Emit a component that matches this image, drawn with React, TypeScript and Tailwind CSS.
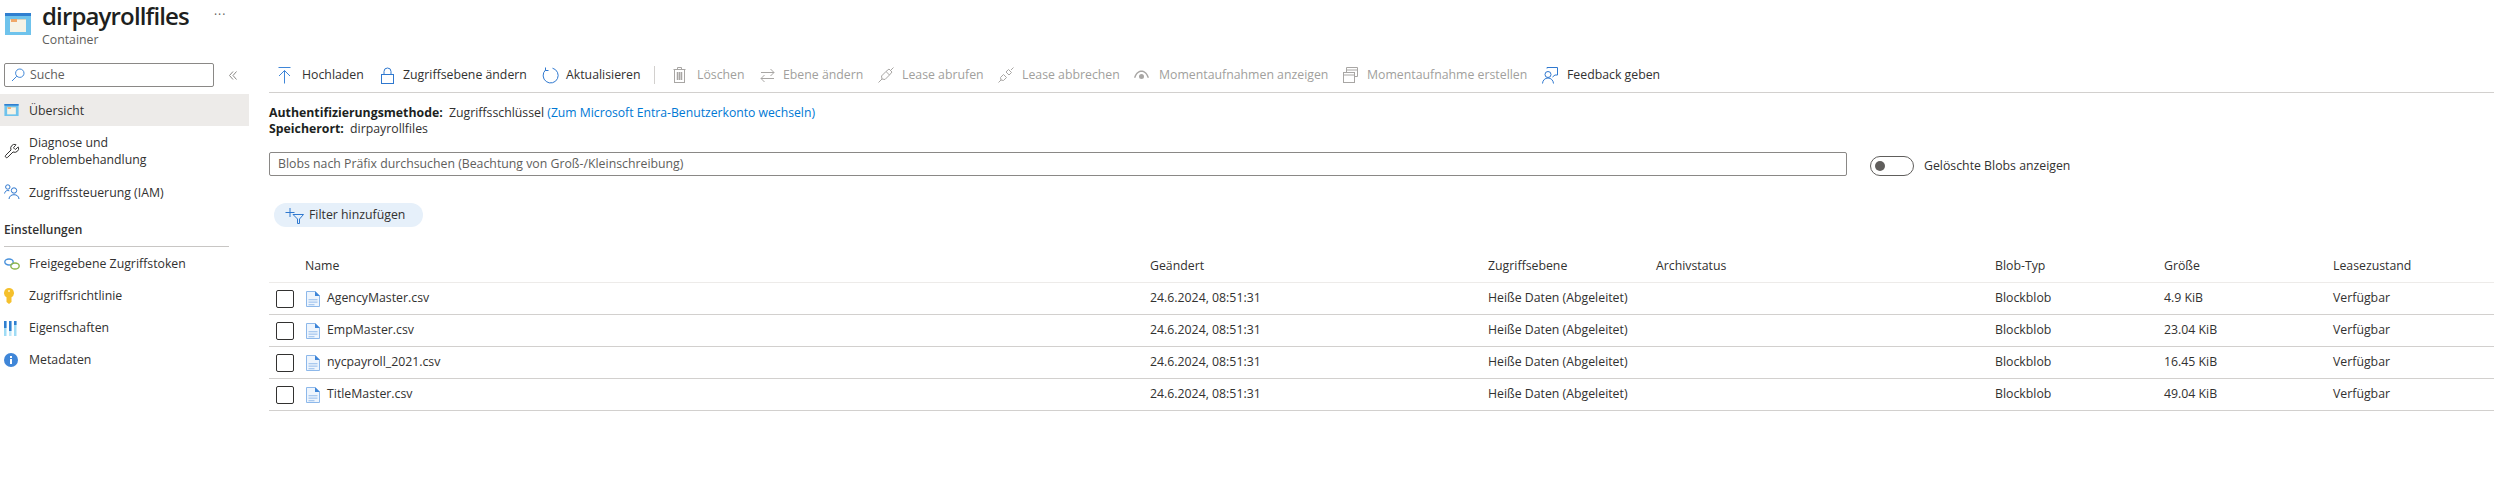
import React from "react";
import { Wrench } from "lucide-react";

const F = "font-['Open_Sans',sans-serif]";

function ContainerIcon({ w, h }: { w: number; h: number }) {
  return (
    <svg width={w} height={h} viewBox="0 0 26 22">
      <rect x="0" y="0" width="26" height="22" fill="#6fc3ec" />
      <rect x="0" y="0" width="26" height="3" fill="#2f7fd0" />
      <rect x="5" y="6" width="16" height="13" fill="#f5f3e6" />
      <rect x="5" y="6" width="16" height="1" fill="#d9d3bd" />
      <rect x="6" y="6" width="6" height="3" fill="#f0a868" />
    </svg>
  );
}
const SearchIcon = () => (
  <svg width="14" height="14" viewBox="0 0 14 14" fill="none" stroke="#3f86d8" strokeWidth="1">
    <circle cx="8.8" cy="5.2" r="4.2" />
    <path d="M5.8 8.2 1 13" />
  </svg>
);
const Collapse = () => (
  <svg width="8" height="9" viewBox="0 0 8 9" fill="none" stroke="#8a8886" strokeWidth="1">
    <path d="M4 .5.500 4.500 4 8.500M7.500.5 4 4.500 7.500 8.500" />
  </svg>
);
const Users = () => (
  <svg width="16" height="16" viewBox="0 0 16 16" fill="none" stroke="#2f78cf" strokeWidth="1">
    <circle cx="3.8" cy="3" r="2.2" />
    <path d="M.6 9.5c.3-2 1.500-3 3.200-3 .6 0 1.100.1 1.500.3" />
    <circle cx="10" cy="6.500" r="2.700" />
    <path d="M5 15c.3-2.800 2.200-4.300 5-4.300s4.700 1.500 5 4.300" />
  </svg>
);
const LinkIcon = () => (
  <svg width="16" height="12" viewBox="0 0 16 12" fill="none" strokeWidth="1.400">
    <ellipse cx="5" cy="4" rx="4.200" ry="3" stroke="#4b93dc" />
    <ellipse cx="11" cy="8" rx="4.200" ry="3" stroke="#8cb44a" />
  </svg>
);
const KeyIcon = () => (
  <svg width="10" height="16" viewBox="0 0 10 16">
    <path d="M5 0a5 5 0 0 1 2.500 9.300V14L5 16l-2.500-2V9.300A5 5 0 0 1 5 0z" fill="#f5c02c" />
    <circle cx="5" cy="3" r="1" fill="#fff3c4" />
  </svg>
);
const PropsIcon = () => (
  <svg width="13" height="15" viewBox="0 0 13 15">
    <rect x="0" y="0" width="2.500" height="15" fill="#9fdcf5" />
    <rect x="5" y="0" width="2.500" height="15" fill="#bfe8f8" />
    <rect x="10" y="0" width="2.500" height="15" fill="#9fdcf5" />
    <rect x="0" y="0" width="2.500" height="7" fill="#2f7fd0" />
    <rect x="5" y="0" width="2.500" height="10" fill="#2f7fd0" />
    <rect x="10" y="0" width="2.500" height="4" fill="#2f7fd0" />
  </svg>
);
const InfoIcon = () => (
  <svg width="14" height="14" viewBox="0 0 14 14">
    <circle cx="7" cy="7" r="7" fill="#3f86d8" />
    <rect x="6" y="6" width="2" height="5" fill="#fff" />
    <rect x="6" y="3" width="2" height="2" fill="#fff" />
  </svg>
);
const Upload = () => (
  <svg width="13" height="17" viewBox="0 0 13 17" fill="none" stroke="#3f86d8" strokeWidth="1">
    <path d="M0.500 .5h12M6.500 16.500V3.500M1 9 6.500 3.500 12 9" />
  </svg>
);
const Lock = () => (
  <svg width="13" height="17" viewBox="0 0 13 17" fill="none" stroke="#2f78cf" strokeWidth="1">
    <rect x=".5" y="7.500" width="12" height="9" />
    <path d="M3 7.500V4.500a3.500 3.500 0 0 1 7 0v3" />
  </svg>
);
const Refresh = () => (
  <svg width="17" height="17" viewBox="0 0 17 17" fill="none" stroke="#2f78cf" strokeWidth="1">
    <path d="M10.500 1.200A7.500 7.500 0 1 1 3.500 3" />
    <path d="M3.500 0.500v3h3" />
  </svg>
);
const Trash = () => (
  <svg width="13" height="16" viewBox="0 0 13 16" fill="none" stroke="#a8a6a4" strokeWidth="1">
    <path d="M.5 2.500h12M4.500 2.500V.5h4v2" />
    <rect x="1.500" y="2.500" width="10" height="13" />
    <path d="M4.500 5v8M6.500 5v8M8.500 5v8" strokeWidth="1.500" />
  </svg>
);
const Swap = () => (
  <svg width="15" height="15" viewBox="0 0 15 15" fill="none" stroke="#a8a6a4" strokeWidth="1">
    <path d="M1 4.500h13M10.500 1 14 4.500 10.500 8" />
    <path d="M14 10.500H1M4.500 7 1 10.500 4.500 14" />
  </svg>
);
const Plug = ({ broken }: { broken?: boolean }) => (
  <svg width="16" height="16" viewBox="0 0 16 16" fill="none" stroke="#a8a6a4" strokeWidth="1">
    <path d={broken ? "M.5 15.500 3 13M13 3 15.500.5" : "M.5 15.500 4 12M12 4 15.500.5"} />
    {broken ? (
      <>
        <path d="M3 13 2.500 10.500 5.500 7.500 8.500 10.500 5.500 13.500Z" />
        <path d="M8 5 10.500 2.500 13.500 5.500 11 8Z" />
      </>
    ) : (
      <>
        <path d="M4 12 3.500 9 8 4.500 11.500 8 7 12.500Z" />
        <path d="M8 4.500 11 2 14 5 11.500 8" />
      </>
    )}
  </svg>
);
const Eye = () => (
  <svg width="15" height="11" viewBox="0 0 15 11">
    <path d="M0 7.500C2 2 5 0.500 7.500 0.500S13 2 15 7.500l-1.300.4C12 3.500 10 2 7.500 2S3 3.500 1.300 7.900Z" fill="#a8a6a4" />
    <circle cx="7.500" cy="6.500" r="2.500" fill="#a8a6a4" />
  </svg>
);
const Snapshot = () => (
  <svg width="15" height="16" viewBox="0 0 15 16" fill="none" stroke="#a8a6a4" strokeWidth="1">
    <path d="M3.500 5V.5h11v9H12" />
    <path d="M3.500 3h11" />
    <rect x=".5" y="5.500" width="11" height="10" />
    <path d="M.5 8h11" />
  </svg>
);
const Feedback = () => (
  <svg width="16" height="17" viewBox="0 0 16 17" fill="none" stroke="#2f78cf" strokeWidth="1">
    <path d="M5 1.500V.5h10.500v7.500H13l-2.500 2" />
    <circle cx="6" cy="7.500" r="3" />
    <path d="M.5 16.500c.2-3.200 2.500-5.500 5.500-5.500s5.300 2.300 5.500 5.500" />
  </svg>
);
const FilterPlus = () => (
  <svg width="19" height="17" viewBox="0 0 19 17" fill="none" stroke="#2f78cf" strokeWidth="1">
    <path d="M5 1v9M0.500 5.500h9" />
    <path d="M8 7.500h10.500L14.500 12v4.500h-2V12Z" />
  </svg>
);
const FileIcon = () => (
  <svg width="14" height="16" viewBox="0 0 14 16">
    <path d="M.5.500h8.500l4.500 4.500v10.500H.5Z" fill="#eef5fd" stroke="#8db8ea" />
    <path d="M9 0l5 5H9Z" fill="#3f86d8" />
    <rect x="2.500" y="8" width="9" height="1.300" fill="#a9c9ef" />
    <rect x="2.500" y="10.500" width="9" height="1.300" fill="#a9c9ef" />
    <rect x="2.500" y="13" width="6" height="1.300" fill="#a9c9ef" />
  </svg>
);

const tools: { w: number; slot: number; icon: React.ReactNode; label: string; on: boolean }[] = [
  { w: 103, slot: 24, icon: <Upload />, label: "Hochladen", on: true },
  { w: 161, slot: 22, icon: <Lock />, label: "Zugriffsebene ändern", on: true },
  { w: 112, slot: 24, icon: <Refresh />, label: "Aktualisieren", on: true },
  { w: 87, slot: 24, icon: <Trash />, label: "Löschen", on: false },
  { w: 118, slot: 23, icon: <Swap />, label: "Ebene ändern", on: false },
  { w: 120, slot: 24, icon: <Plug />, label: "Lease abrufen", on: false },
  { w: 136, slot: 24, icon: <Plug broken />, label: "Lease abbrechen", on: false },
  { w: 209, slot: 25, icon: <Eye />, label: "Momentaufnahmen anzeigen", on: false },
  { w: 199, slot: 24, icon: <Snapshot />, label: "Momentaufnahme erstellen", on: false },
  { w: 125, slot: 25, icon: <Feedback />, label: "Feedback geben", on: true },
];

const nav1 = [
  { h: "h-[32px]", active: true, icon: <ContainerIcon w={15} h={12} />, label: "Übersicht" },
  { h: "h-[50px]", active: false, icon: <Wrench size={16} color="#323130" strokeWidth={1.5} />, label: "Diagnose und Problembehandlung" },
  { h: "h-[32px]", active: false, icon: <Users />, label: "Zugriffssteuerung (IAM)" },
];
const nav2 = [
  { icon: <LinkIcon />, label: "Freigegebene Zugriffstoken" },
  { icon: <KeyIcon />, label: "Zugriffsrichtlinie" },
  { icon: <PropsIcon />, label: "Eigenschaften" },
  { icon: <InfoIcon />, label: "Metadaten" },
];

const rows = [
  ["AgencyMaster.csv", "4.9 KiB"],
  ["EmpMaster.csv", "23.04 KiB"],
  ["nycpayroll_2021.csv", "16.45 KiB"],
  ["TitleMaster.csv", "49.04 KiB"],
];

const cols = "grid grid-cols-[845px_338px_168px_339px_169px_169px_1fr]";

export default function App() {
  return (
    <div className={`${F} w-[2494px] h-[487px] overflow-hidden bg-white text-[12.3px] text-[#323130]`}>
      <header className="h-[58px] flex items-start">
        <div className="ml-[5px] mt-[13px]">
          <ContainerIcon w={26} h={22} />
        </div>
        <div className="ml-[11px]">
          <div className="text-[24px] leading-[32px] font-semibold text-[#201f1e] tracking-[-0.85px]">dirpayrollfiles</div>
          <div className="text-[12.3px] leading-[16px] text-[#605e5c]">Container</div>
        </div>
        <div className="ml-[25px] mt-[6px] text-[12px] tracking-[1px] text-[#605e5c]">···</div>
      </header>
      <div className="flex">
        <aside className="w-[249px] shrink-0">
          <div className="mt-[5px] flex items-center">
            <div className="ml-[4px] w-[210px] h-[24px] border border-[#8a8886] rounded-[2px] flex items-center pl-[6px] gap-[5px]">
              <SearchIcon />
              <span className="text-[#605e5c]">Suche</span>
            </div>
            <span className="ml-[15px] flex">
              <Collapse />
            </span>
          </div>
          <nav className="mt-[7px]">
            {nav1.map((n) => (
              <div key={n.label} className={`${n.h} flex items-center pl-[4px] ${n.active ? "bg-[#edebe9]" : ""}`}>
                <div className="w-[25px] shrink-0 flex">{n.icon}</div>
                <div className="w-[170px] leading-[17px]">{n.label}</div>
              </div>
            ))}
          </nav>
          <div className="ml-[4px] w-[225px] mt-[14px] h-[25px] border-b border-[#c8c6c4] text-[12px] font-semibold leading-[16px] text-[#323130]">Einstellungen</div>
          <nav className="mt-[1px]">
            {nav2.map((n) => (
              <div key={n.label} className="h-[32px] flex items-center pl-[4px]">
                <div className="w-[25px] shrink-0 flex">{n.icon}</div>
                <div>{n.label}</div>
              </div>
            ))}
          </nav>
        </aside>
        <main className="ml-[20px] flex-1 min-w-0">
          <div className="h-[35px] border-b border-[#d2d0ce] flex items-center pl-[9px]">
            {tools.map((t, i) => (
              <React.Fragment key={t.label}>
                <div style={{ width: t.w }} className={`shrink-0 flex items-center whitespace-nowrap ${t.on ? "text-[#323130]" : "text-[#a19f9d]"}`}>
                  <span style={{ width: t.slot }} className="shrink-0 flex">{t.icon}</span>
                  <span>{t.label}</span>
                </div>
                {i === 2 && <div className="w-px h-[18px] bg-[#d2d0ce] mr-[18px]" />}
              </React.Fragment>
            ))}
          </div>
          <div className="mt-[12px] leading-[16px]">
            <div>
              <b className="font-bold text-[#201f1e] mr-[3px]">Authentifizierungsmethode:</b> Zugriffsschlüssel{" "}
              <span className="text-[#0078d4] text-[12.2px]">(Zum Microsoft Entra-Benutzerkonto wechseln)</span>
            </div>
            <div>
              <b className="font-bold text-[#201f1e] mr-[3px]">Speicherort:</b> dirpayrollfiles
            </div>
          </div>
          <div className="mt-[15px] flex items-center">
            <div className="w-[1578px] h-[24px] border border-[#8a8886] rounded-[2px] pl-[8px] flex items-center text-[#605e5c]">
              Blobs nach Präfix durchsuchen (Beachtung von Groß-/Kleinschreibung)
            </div>
            <div className="ml-[23px] w-[44px] h-[20px] mt-[4px] border border-[#605e5c] rounded-full flex items-center pl-[4px]">
              <div className="w-[10px] h-[10px] rounded-full bg-[#605e5c]" />
            </div>
            <div className="ml-[10px] mt-[4px]">Gelöschte Blobs anzeigen</div>
          </div>
          <div className="mt-[27px] ml-[5px] w-[149px] h-[24px] rounded-full bg-[#e6f0fa] flex items-center pl-[11px] gap-[5px]">
            <FilterPlus />
            <span>Filter hinzufügen</span>
          </div>
          <div className="mt-[23px]">
            <div className={`${cols} h-[33px] items-center border-b border-[#edebe9] font-medium pl-[36px]`}>
              {["Name", "Geändert", "Zugriffsebene", "Archivstatus", "Blob-Typ", "Größe", "Leasezustand"].map((h) => (
                <div key={h}>{h}</div>
              ))}
            </div>
            {rows.map(([name, size]) => (
              <div key={name} className={`${cols} h-[32px] items-center border-b border-[#d2d0ce] pl-[36px]`}>
                <div className="flex items-center gap-[7px]">
                  <span className="w-[18px] h-[18px] -ml-[29px] mr-[5px] border border-[#323130] rounded-[2px] shrink-0" />
                  <FileIcon />
                  <span>{name}</span>
                </div>
                <div>24.6.2024, 08:51:31</div>
                <div>Heiße Daten (Abgeleitet)</div>
                <div />
                <div>Blockblob</div>
                <div>{size}</div>
                <div>Verfügbar</div>
              </div>
            ))}
          </div>
        </main>
      </div>
    </div>
  );
}
